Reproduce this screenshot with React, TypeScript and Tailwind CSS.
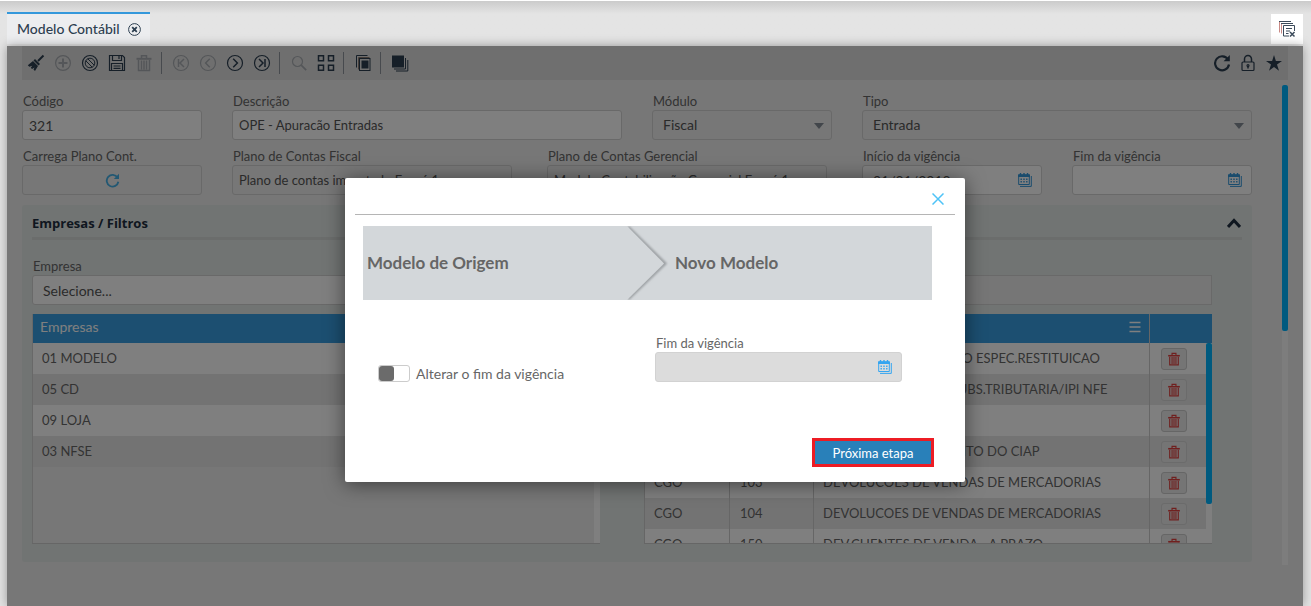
import React, { useState } from "react";

type SvgProps = { children: React.ReactNode; size?: string; box?: string };

const Svg = ({ children, size = "w-[18px] h-[18px]", box = "0 0 18 18" }: SvgProps) => (
  <svg viewBox={box} className={size} fill="none" stroke="currentColor" strokeWidth="1.2" aria-hidden="true">
    {children}
  </svg>
);

const Broom = () => (
  <Svg>
    <path d="M16.5 1.5L11 7" strokeWidth="2" />
    <path d="M8 5l5 5-1.500 1.500-5-5z" fill="currentColor" stroke="none" />
    <path d="M6 7l5 5-3 5-1.500-1.500 1-2-2.500 1.500-1.200-1.200 1.500-2-3 1-1.500-1.500z" fill="currentColor" stroke="none" />
  </Svg>
);

const Plus = () => (
  <Svg>
    <circle cx="9" cy="9" r="7.400" />
    <path d="M9 4.500v9M4.500 9h9" strokeWidth="2" />
  </Svg>
);

const Ban = () => (
  <Svg>
    <circle cx="9" cy="9" r="7.500" />
    <circle cx="9" cy="9" r="4.800" strokeWidth="1" />
    <path d="M4.800 6.800l6.400 6.400M6.800 4.800l6.400 6.400" strokeWidth="1" />
  </Svg>
);

const Save = () => (
  <Svg>
    <path d="M1.500 1.500h13l2 2v13h-15z" />
    <path d="M4.500 1.500v5h9v-5M11 2v3M3.500 16.500v-7h11v7M5.500 12h7M5.500 14.300h7" />
  </Svg>
);

const Trash = ({ size }: { size?: string }) => (
  <Svg size={size}>
    <path d="M6.500 4V1.800h5V4" strokeWidth="1.500" />
    <path d="M1.500 4.800h15" strokeWidth="2" />
    <path d="M3.500 6v10.500h11V6M6.500 6.500v9M9 6.500v9M11.500 6.500v9" strokeWidth="1.500" />
  </Svg>
);

const Nav = ({ d }: { d: string }) => (
  <Svg>
    <circle cx="9" cy="9" r="7.500" />
    <path d={d} strokeWidth="1.500" />
  </Svg>
);

const Search = () => (
  <Svg>
    <circle cx="7.500" cy="7.500" r="5" />
    <path d="M11.200 11.200l5 5" strokeWidth="1.800" />
  </Svg>
);

const Tiles = () => (
  <Svg>
    <path d="M1.500 1.700h5v5h-5zM11.500 1.700h5v5h-5zM1.500 11.300h5v5h-5zM11.500 11.300h5v5h-5z" strokeWidth="1.500" />
  </Svg>
);

const Frames = () => (
  <Svg>
    <path d="M13.500 1.500h-11v12" strokeWidth="1" />
    <path d="M15.500 3.500h-11v12" strokeWidth="1" stroke="#8a7a70" />
    <rect x="5.500" y="4.500" width="10.500" height="12" strokeWidth="1" />
    <rect x="7.500" y="6.500" width="7" height="8" fill="currentColor" stroke="none" />
  </Svg>
);

const Stack = () => (
  <Svg>
    <rect x="1" y="1.500" width="12" height="12" fill="currentColor" stroke="none" />
    <path d="M3 15h11.500V4M5 17h11.800V6" strokeWidth="1" />
  </Svg>
);

const Refresh = ({ size }: { size?: string }) => (
  <Svg size={size}>
    <path d="M15 5.500A7 7 0 1 0 16 10.500" strokeWidth="2.200" />
    <path d="M16.800 1v6.200h-6.200z" fill="currentColor" stroke="none" />
  </Svg>
);

const Lock = () => (
  <Svg>
    <rect x="3" y="8" width="12" height="8.500" rx="1" />
    <path d="M5.500 8V5a3.500 3.500 0 0 1 7 0v3M9 12v2.500" strokeWidth="1.500" />
    <circle cx="9" cy="11.500" r="1" />
  </Svg>
);

const Star = () => (
  <Svg>
    <path d="M9 1l1.900 6H17l-5 3.600 2 6.200-5-3.800-5 3.800 2-6.200L1 7h6.100z" fill="currentColor" stroke="none" />
  </Svg>
);

const Calendar = () => (
  <Svg size="w-[14px] h-[14px]" box="0 0 14 14">
    <path d="M.7 1.800h10.600v9.700H.7z" strokeWidth="1" />
    <path d="M0 1.500h12v2.500H0z" fill="currentColor" stroke="none" />
    <path d="M2.500 0v2.500M6 0v2.500M9.500 0v2.500" strokeWidth="1.400" />
    <path d="M2.500 6.200h7M2.500 8.700h7" strokeDasharray="1.400 1.400" strokeWidth="1.600" />
    <path d="M2 13.400h11.300V3" strokeWidth="1" />
  </Svg>
);

const Windows = () => (
  <Svg>
    <path d="M1.500 1.500v11M3.500 3.500v10" stroke="#c98a86" strokeWidth="1" />
    <path d="M1 1.500h12M3 3.500h12" strokeWidth="1" />
    <path d="M11 16H5.500V5.500h11V11M8 8.500h6M8 11h4M8 13.500h2.500" strokeWidth="1" />
    <path d="M12 12l4.500 4.500M16.500 12L12 16.500" strokeWidth="1.500" />
  </Svg>
);

type Tool = { label: string; icon: React.ReactNode; disabled?: boolean };

const toolGroups: Tool[][] = [
  [
    { label: "Limpar", icon: <Broom /> },
    { label: "Novo", icon: <Plus />, disabled: true },
    { label: "Cancelar", icon: <Ban /> },
    { label: "Salvar", icon: <Save /> },
    { label: "Excluir", icon: <Trash />, disabled: true },
  ],
  [
    { label: "Primeiro", icon: <Nav d="M6.500 5v8M12 5L8 9l4 4" />, disabled: true },
    { label: "Anterior", icon: <Nav d="M10.800 4.800L6.600 9l4.200 4.200" />, disabled: true },
    { label: "Próximo", icon: <Nav d="M7.200 4.800L11.400 9l-4.200 4.200" /> },
    { label: "Último", icon: <Nav d="M6 5l4 4-4 4M12 5v8" /> },
  ],
  [
    { label: "Pesquisar", icon: <Search />, disabled: true },
    { label: "Grade", icon: <Tiles /> },
  ],
  [{ label: "Duplicar", icon: <Frames /> }],
  [{ label: "Copiar modelo", icon: <Stack /> }],
];

const empresas = ["01 MODELO", "05 CD", "09 LOJA", "03 NFSE"];

const filtros = [
  { tipo: "CGO", codigo: "45", descricao: "RECEBIMENTO CREDITO ESPEC.RESTITUICAO" },
  { tipo: "CGO", codigo: "61", descricao: "COMPRA COM ICMS SUBS.TRIBUTARIA/IPI NFE" },
  { tipo: "CGO", codigo: "72", descricao: "COMPRAS" },
  { tipo: "CGO", codigo: "98", descricao: "ENTRADAS COM CREDITO DO CIAP" },
  { tipo: "CGO", codigo: "103", descricao: "DEVOLUCOES DE VENDAS DE MERCADORIAS" },
  { tipo: "CGO", codigo: "104", descricao: "DEVOLUCOES DE VENDAS DE MERCADORIAS" },
  { tipo: "CGO", codigo: "150", descricao: "DEV.CLIENTES DE VENDA - A PRAZO" },
];

const controlBase = "block w-full h-[30px] border border-[#d2d2d2] rounded-[3px] text-[#555]";
const inputBase = `${controlBase} text-[13px]`;

type FieldProps = { id: string; label: string; className?: string; children: React.ReactNode };

const Field = ({ id, label, className = "", children }: FieldProps) => (
  <div className={`min-w-0 ${className}`}>
    <label htmlFor={id} className="block h-[17px] pl-px text-[13px] leading-4 text-[#666] truncate">
      {label}
    </label>
    {children}
  </div>
);

const Select = ({ id, value }: { id: string; value: string }) => (
  <div className="relative">
    <select id={id} disabled className={`${controlBase} appearance-none bg-[#eee] pl-[10px] text-sm opacity-100`}>
      <option>{value}</option>
    </select>
    <span className="absolute right-2 top-[13px] border-x-[5px] border-t-[6px] border-x-transparent border-t-[#848d96]" />
  </div>
);

type DateProps = { id: string; value?: string; disabled?: boolean };

const DateInput = ({ id, value = "", disabled }: DateProps) => (
  <div className="relative">
    <input
      id={id}
      defaultValue={value}
      disabled={disabled}
      className={`${controlBase} px-[10px] text-sm ${disabled ? "bg-[#dcdcdc]" : "bg-white"}`}
    />
    <button
      type="button"
      aria-label="Abrir calendário"
      className={`absolute right-[10px] top-2 ${disabled ? "text-[#35a5f0]" : "text-[#3498db]"}`}
    >
      <Calendar />
    </button>
  </div>
);

const Toolbar = () => (
  <div className="mx-[15px] flex h-[34px] items-center justify-between bg-[#dfdfdf] text-[#2c3e50]">
    <div className="flex items-center">
      {toolGroups.map((group, groupIndex) => (
        <React.Fragment key={groupIndex}>
          {groupIndex > 0 && <span className="ml-1 mr-[5px] h-[22px] w-px bg-[#8e959d]" />}
          {group.map((tool) => (
            <button
              key={tool.label}
              type="button"
              aria-label={tool.label}
              disabled={tool.disabled}
              className="flex w-[27px] justify-center disabled:text-[#a9adb2]"
            >
              {tool.icon}
            </button>
          ))}
        </React.Fragment>
      ))}
    </div>
    <div className="flex items-center pr-px">
      <button type="button" aria-label="Atualizar" className="flex w-[26px] justify-center">
        <Refresh />
      </button>
      <button type="button" aria-label="Bloquear" className="flex w-[26px] justify-center">
        <Lock />
      </button>
      <button type="button" aria-label="Favorito" className="flex w-[26px] justify-center">
        <Star />
      </button>
    </div>
  </div>
);

const EmpresasTable = () => (
  <div className="flex h-[230px] overflow-hidden border-b border-[#ccc] bg-[#efefef]">
    <div className="flex-1 border-l border-[#d0d0d0]">
      <table className="w-full text-left">
        <thead>
          <tr className="h-[29px] bg-[#389fe3] text-sm text-white">
            <th className="pl-[7px] pb-1 font-normal">Empresas</th>
          </tr>
        </thead>
        <tbody className="text-[13px] text-[#666]">
          {empresas.map((empresa) => (
            <tr key={empresa} className="h-[31px] bg-white even:bg-[#e6e6e6]">
              <td className="pl-[9px] pt-px">{empresa}</td>
            </tr>
          ))}
        </tbody>
      </table>
    </div>
    <div className="w-[6px] bg-white">
      <div className="h-[29px] bg-[#389fe3]" />
    </div>
  </div>
);

const FiltrosTable = () => (
  <div className="flex h-[230px] overflow-hidden border-b border-[#ccc]">
    <div className="min-w-0 flex-1">
      <table className="w-full table-fixed text-left">
        <colgroup>
          <col className="w-[85px]" />
          <col className="w-[84px]" />
          <col />
          <col className="w-[57px]" />
        </colgroup>
        <thead>
          <tr className="h-[29px] bg-[#389fe3] text-sm text-white">
            <th className="pl-[9px] font-normal">Tipo</th>
            <th className="pl-[9px] font-normal">Código</th>
            <th className="pl-[9px] pb-1 font-normal">
              <div className="flex items-center justify-between pr-2">
                Descrição
                <button type="button" aria-label="Menu da coluna">
                  <Svg size="w-[12px] h-[12px]" box="0 0 12 12">
                    <path d="M.5 1.500h11M.5 6h11M.5 10.500h11" strokeWidth="1.600" />
                  </Svg>
                </button>
              </div>
            </th>
            <th className="border-l border-[#ccc]" aria-label="Ações" />
          </tr>
        </thead>
        <tbody className="text-[13px] text-[#666]">
          {filtros.map((filtro, index) => (
            <tr key={index} className="group h-[31px] bg-white even:bg-[#e6e6e6]">
              <td className="border-l border-[#ccc] pl-[9px] pt-px">{filtro.tipo}</td>
              <td className="border-l border-[#ccc] pl-[10px] pt-px">{filtro.codigo}</td>
              <td className="whitespace-nowrap border-l border-[#ccc] pl-[9px] pt-px">{filtro.descricao}</td>
              <td className="border-l border-[#ccc] pl-[11px]">
                <button
                  type="button"
                  aria-label="Excluir filtro"
                  className="flex h-[22px] w-[26px] items-center justify-center rounded-[3px] border border-[#ccc] bg-[#eaeaea] text-[#e0403f] group-even:border-[#d6d6d6]"
                >
                  <Trash size="w-[14px] h-[14px]" />
                </button>
              </td>
            </tr>
          ))}
        </tbody>
      </table>
    </div>
    <div className="w-[6px] bg-white">
      <div className="h-[29px] bg-[#389fe3]" />
      <div className="h-[161px] rounded-[2px] bg-[#00b4ff]" />
    </div>
  </div>
);

const CopyDialog = ({ onClose }: { onClose: () => void }) => {
  const [changeEnd, setChangeEnd] = useState(false);

  return (
    <div
      role="dialog"
      aria-label="Copiar modelo"
      className="flex w-[620px] max-w-full flex-col rounded-[2px] bg-white pb-[15px] shadow-[0_2px_20px_rgba(0,0,0,0.5)]"
    >
      <div className="mx-[10px] flex h-[37px] items-center justify-end border-b border-[#b5b5b5] pr-[11px] pt-[5px]">
        <button type="button" aria-label="Fechar" onClick={onClose} className="text-[#4fc3f7]">
          <Svg size="w-[12px] h-[12px]" box="0 0 12 12">
            <path d="M.5.5l11 11M11.500.5l-11 11" strokeWidth="1.500" />
          </Svg>
        </button>
      </div>

      {/* the steps */}
      <ol className="ml-[18px] mr-[33px] mt-[11px] flex h-[74px] items-center overflow-hidden bg-[#d3d7da] text-[17px] font-bold text-[#666]">
        <li className="w-[264px] pl-1">Modelo de Origem</li>
        <li className="flex items-center">
          <svg viewBox="0 0 48 74" className="h-[74px] w-12" aria-hidden="true">
            <defs>
              <filter id="edge" x="-50%" y="-50%" width="200%" height="200%">
                <feGaussianBlur stdDeviation="1.3" />
              </filter>
            </defs>
            <path d="M1 1l37 36.500L1 73" fill="none" stroke="#9a9ea1" strokeWidth="3" filter="url(#edge)" />
            <path d="M-2 0h2l37 37.500L0 74h-2z" fill="#d3d7da" />
          </svg>
          Novo Modelo
        </li>
      </ol>

      <div className="mt-[35px] flex items-end justify-between pl-[33px] pr-[63px]">
        <label className="flex cursor-pointer items-center gap-[6px] text-sm leading-[17px] text-[#666]">
          <input
            type="checkbox"
            checked={changeEnd}
            onChange={() => setChangeEnd(!changeEnd)}
            className="peer sr-only"
          />
          <span className="flex h-[17px] w-8 rounded-[3px] border border-[#ccc] peer-checked:justify-end">
            <span className="h-[15px] w-[15px] rounded-[3px] bg-[#6b6b6b]" />
          </span>
          Alterar o fim da vigência
        </label>
        <Field id="novo-fim" label="Fim da vigência" className="w-[247px]">
          <DateInput id="novo-fim" disabled={!changeEnd} />
        </Field>
      </div>

      <button
        type="button"
        className="mr-[31px] mt-[56px] h-[29px] w-[122px] self-end border-[3px] border-[#ed1c24] bg-[#2980b9] text-[13px] leading-5 text-white"
      >
        Próxima etapa
      </button>
    </div>
  );
};

const App = () => {
  const [open, setOpen] = useState(true);

  return (
    <div className="flex min-h-screen flex-col overflow-hidden bg-[#e4e4e4] font-['Lato',sans-serif]">
      <div className="h-px bg-white" />
      <header className="flex h-[43px] items-end justify-between bg-linear-to-b from-[#cbcbcb] to-[#e4e4e4] to-30% pl-[7px] pr-2">
        <div className="flex h-8 items-center gap-2 border-t-2 border-[#3498db] bg-[#ecedef] pl-[10px] pr-[9px] text-sm font-medium text-[#2c3e50]">
          <span>Modelo Contábil</span>
          <button type="button" aria-label="Fechar aba">
            <Svg size="w-[13px] h-[13px]" box="0 0 13 13">
              <circle cx="6.500" cy="6.500" r="5.900" strokeWidth="1" />
              <path d="M4.200 4.200l4.600 4.600M8.800 4.200L4.200 8.800" strokeWidth="1.800" />
            </Svg>
          </button>
        </div>
        <button
          type="button"
          aria-label="Fechar todas as abas"
          className="flex h-[30px] w-8 items-center justify-center bg-white text-[#3b4a5a]"
        >
          <Windows />
        </button>
      </header>

      <main className="relative ml-[7px] mr-2 mt-[2px] flex-1 bg-[#eee] shadow-[0_0_10px_rgba(0,0,0,0.35)]">
        <Toolbar />

        <div className="flex px-[15px] pb-10">
          <div className="min-w-0 flex-1 pt-[13px]">
            <div className="grid grid-cols-6 gap-x-[30px] gap-y-2">
              <Field id="codigo" label="Código">
                <input id="codigo" defaultValue="321" className={`${controlBase} bg-white px-[6px] text-sm`} />
              </Field>
              <Field id="descricao" label="Descrição" className="col-span-2">
                <input id="descricao" defaultValue="OPE - Apuracão Entradas" className={`${inputBase} bg-white px-[6px]`} />
              </Field>
              <Field id="modulo" label="Módulo">
                <Select id="modulo" value="Fiscal" />
              </Field>
              <Field id="tipo" label="Tipo" className="col-span-2">
                <Select id="tipo" value="Entrada" />
              </Field>

              <Field id="carrega" label="Carrega Plano Cont.">
                <button id="carrega" type="button" className={`${inputBase} bg-[#eee]`}>
                  <span className="flex justify-center text-[#45b0e6]">
                    <Refresh size="w-[15px] h-[15px]" />
                  </span>
                </button>
              </Field>
              <div className="col-span-3 flex gap-[35px] pr-[5px]">
                <Field id="fiscal" label="Plano de Contas Fiscal" className="flex-1">
                  <input id="fiscal" disabled defaultValue="Plano de contas importado Esocé 1" className={`${inputBase} bg-[#eee] px-[6px]`} />
                </Field>
                <Field id="gerencial" label="Plano de Contas Gerencial" className="flex-1">
                  <input id="gerencial" disabled defaultValue="Modelo Contabilização Gerencial Esocé 1" className={`${inputBase} bg-[#eee] px-[6px]`} />
                </Field>
              </div>
              <Field id="inicio" label="Início da vigência">
                <DateInput id="inicio" value="01/01/2010" />
              </Field>
              <Field id="fim" label="Fim da vigência">
                <DateInput id="fim" />
              </Field>
            </div>

            <section className="mt-[10px] rounded-[3px] bg-[#e3e8e6] px-[10px] pb-[18px]">
              <div className="flex h-[35px] items-center justify-between border-b-[3px] border-[#d6dad8] pr-px pt-1 text-[#1f2f40]">
                <h2 className="pt-px font-['Open_Sans',sans-serif] text-[13px] font-bold">Empresas / Filtros</h2>
                <button type="button" aria-label="Recolher">
                  <Svg size="w-[14px] h-[11px]" box="0 0 14 11">
                    <path d="M1 9l6-6.500L13 9" strokeWidth="3" />
                  </Svg>
                </button>
              </div>

              <div className="mt-[18px] grid grid-cols-2 gap-x-[44px] gap-y-[9px] pr-[30px]">
                <Field id="empresa" label="Empresa">
                  <input id="empresa" placeholder="Selecione..." className={`${controlBase} bg-white px-[10px] text-sm placeholder:text-[#555]`} />
                </Field>
                <div className="pt-[17px]">
                  <input aria-label="Filtro" disabled className="block h-[30px] w-full border border-[#d2d2d2] bg-[#ececec]" />
                </div>
                <EmpresasTable />
                <FiltrosTable />
              </div>
            </section>
          </div>

          {/* page scroll */}
          <div className="ml-[30px] mt-[5px] h-[480px] w-[6px] bg-[#fbfbfb]">
            <div className="h-[246px] rounded-[2px] bg-[#00b4ff]" />
          </div>
        </div>

        {open && (
          <div className="absolute inset-0 flex items-start justify-center bg-black/50 pt-[132px]">
            <CopyDialog onClose={() => setOpen(false)} />
          </div>
        )}
      </main>
    </div>
  );
};

export default App;
